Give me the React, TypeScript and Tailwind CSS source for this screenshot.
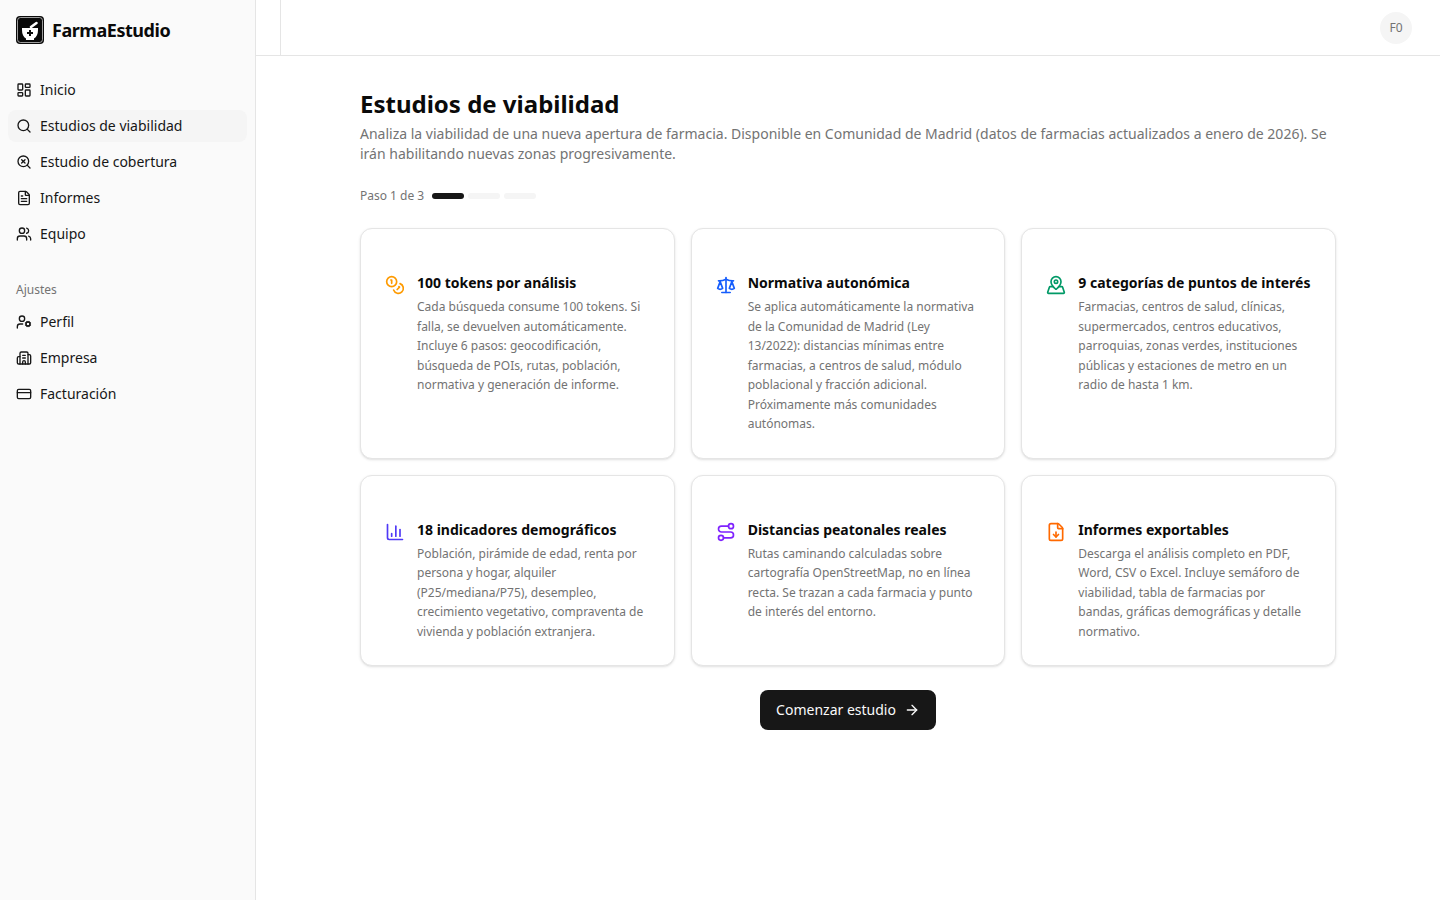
import {
  ArrowRight,
  Building2,
  ChartColumn,
  Coins,
  CreditCard,
  FileDown,
  FileText,
  LayoutDashboard,
  MapPinned,
  Route,
  Scale,
  Search,
  SearchX,
  UserCog,
  Users,
} from 'lucide-react'

const mainNav = [
  { label: 'Inicio', icon: LayoutDashboard },
  { label: 'Estudios de viabilidad', icon: Search, active: true },
  { label: 'Estudio de cobertura', icon: SearchX },
  { label: 'Informes', icon: FileText },
  { label: 'Equipo', icon: Users },
]

const settingsNav = [
  { label: 'Perfil', icon: UserCog },
  { label: 'Empresa', icon: Building2 },
  { label: 'Facturación', icon: CreditCard },
]

const cards = [
  {
    title: '100 tokens por análisis',
    icon: Coins,
    color: 'text-amber-500',
    text: 'Cada búsqueda consume 100 tokens. Si falla, se devuelven automáticamente. Incluye 6 pasos: geocodificación, búsqueda de POIs, rutas, población, normativa y generación de informe.',
  },
  {
    title: 'Normativa autonómica',
    icon: Scale,
    color: 'text-blue-600',
    text: 'Se aplica automáticamente la normativa de la Comunidad de Madrid (Ley 13/2022): distancias mínimas entre farmacias, a centros de salud, módulo poblacional y fracción adicional. Próximamente más comunidades autónomas.',
  },
  {
    title: '9 categorías de puntos de interés',
    icon: MapPinned,
    color: 'text-emerald-600',
    text: 'Farmacias, centros de salud, clínicas, supermercados, centros educativos, parroquias, zonas verdes, instituciones públicas y estaciones de metro en un radio de hasta 1 km.',
  },
  {
    title: '18 indicadores demográficos',
    icon: ChartColumn,
    color: 'text-indigo-600',
    text: 'Población, pirámide de edad, renta por persona y hogar, alquiler (P25/mediana/P75), desempleo, crecimiento vegetativo, compraventa de vivienda y población extranjera.',
  },
  {
    title: 'Distancias peatonales reales',
    icon: Route,
    color: 'text-violet-600',
    text: 'Rutas caminando calculadas sobre cartografía OpenStreetMap, no en línea recta. Se trazan a cada farmacia y punto de interés del entorno.',
  },
  {
    title: 'Informes exportables',
    icon: FileDown,
    color: 'text-orange-500',
    text: 'Descarga el análisis completo en PDF, Word, CSV o Excel. Incluye semáforo de viabilidad, tabla de farmacias por bandas, gráficas demográficas y detalle normativo.',
  },
]

function Logo() {
  return (
    <svg width="28" height="28" viewBox="0 0 28 28" className="shrink-0">
      <rect width="28" height="28" rx="4" fill="#0a0a0a" />
      <rect x="1.5" y="1.5" width="25" height="25" rx="3" fill="none" stroke="#fff" strokeWidth="0.6" />
      {/* pestle */}
      <path d="M15 11 L20.5 7" stroke="#fff" strokeWidth="2.6" strokeLinecap="round" />
      {/* mortar */}
      <path d="M6 12 H22 V14 C22 18.5 20.5 21 18 22.4 V24 H10 V22.4 C7.5 21 6 18.5 6 14 Z" fill="#fff" />
      <path d="M14 14 V20 M11 17 H17" stroke="#0a0a0a" strokeWidth="2" />
    </svg>
  )
}

function NavItem({ label, icon: Icon, active }: { label: string; icon: typeof Search; active?: boolean }) {
  return (
    <a
      className={`flex h-8 items-center gap-2 rounded-lg px-2 text-sm text-[#171717] ${active ? 'bg-[#f5f5f5]' : ''}`}
    >
      <Icon size={16} strokeWidth={2} />
      <span>{label}</span>
    </a>
  )
}

export default function App() {
  return (
    <div className="flex min-h-[900px] bg-white font-['Noto_Sans',sans-serif] text-[#0a0a0a]">
      {/* Sidebar */}
      <aside className="w-64 shrink-0 border-r border-[#e5e5e5] bg-[#fafafa]">
        <div className="flex items-center gap-2 px-4 pt-4">
          <Logo />
          <span className="text-lg font-bold leading-7 tracking-tight">FarmaEstudio</span>
        </div>
        <nav className="mt-[30px] flex flex-col gap-1 pl-2 pr-2">
          {mainNav.map((item) => (
            <NavItem key={item.label} {...item} />
          ))}
        </nav>
        <div className="mt-8 pl-4 text-xs leading-4 text-[#737373]">Ajustes</div>
        <nav className="mt-2 flex flex-col gap-1 pl-2 pr-2">
          {settingsNav.map((item) => (
            <NavItem key={item.label} {...item} />
          ))}
        </nav>
      </aside>

      <div className="min-w-0 flex-1">
        {/* Top bar */}
        <header className="flex h-14 items-center justify-between border-b border-[#e5e5e5] pr-7 pl-6">
          <div className="h-full w-px bg-[#e5e5e5]" />
          <div className="flex size-8 items-center justify-center rounded-full bg-[#f5f5f5] text-xs text-[#737373]">
            F0
          </div>
        </header>

        <main className="mx-auto max-w-5xl px-6 pt-8">
          <h1 className="text-2xl font-bold leading-8">Estudios de viabilidad</h1>
          <p className="mt-1 text-sm leading-5 text-[#737373]">
            Analiza la viabilidad de una nueva apertura de farmacia. Disponible en Comunidad de Madrid (datos de
            farmacias actualizados a enero de 2026). Se irán habilitando nuevas zonas progresivamente.
          </p>

          <div className="mt-6 flex items-center gap-2">
            <span className="text-xs text-[#737373]">Paso 1 de 3</span>
            <div className="flex gap-1">
              <div className="h-1.5 w-8 rounded-full bg-[#171717]" />
              <div className="h-1.5 w-8 rounded-full bg-[#f5f5f5]" />
              <div className="h-1.5 w-8 rounded-full bg-[#f5f5f5]" />
            </div>
          </div>

          <div className="mt-6 grid grid-cols-3 gap-4">
            {cards.map((card) => (
              <div
                key={card.title}
                className="flex items-start gap-3 rounded-xl border border-[#e5e5e5] bg-white px-6 pt-11 pb-6 shadow-sm"
              >
                <card.icon size={20} strokeWidth={2} className={`mt-0.5 shrink-0 ${card.color}`} />
                <div>
                  <h3 className="text-sm leading-5 font-bold">{card.title}</h3>
                  <p className="mt-1 text-xs leading-[19.5px] text-[#737373]">{card.text}</p>
                </div>
              </div>
            ))}
          </div>

          <div className="mt-6 flex justify-center">
            <button className="flex h-10 items-center gap-2 rounded-lg bg-[#171717] px-4 text-sm text-[#fafafa]">
              Comenzar estudio
              <ArrowRight size={16} />
            </button>
          </div>
        </main>
      </div>
    </div>
  )
}
